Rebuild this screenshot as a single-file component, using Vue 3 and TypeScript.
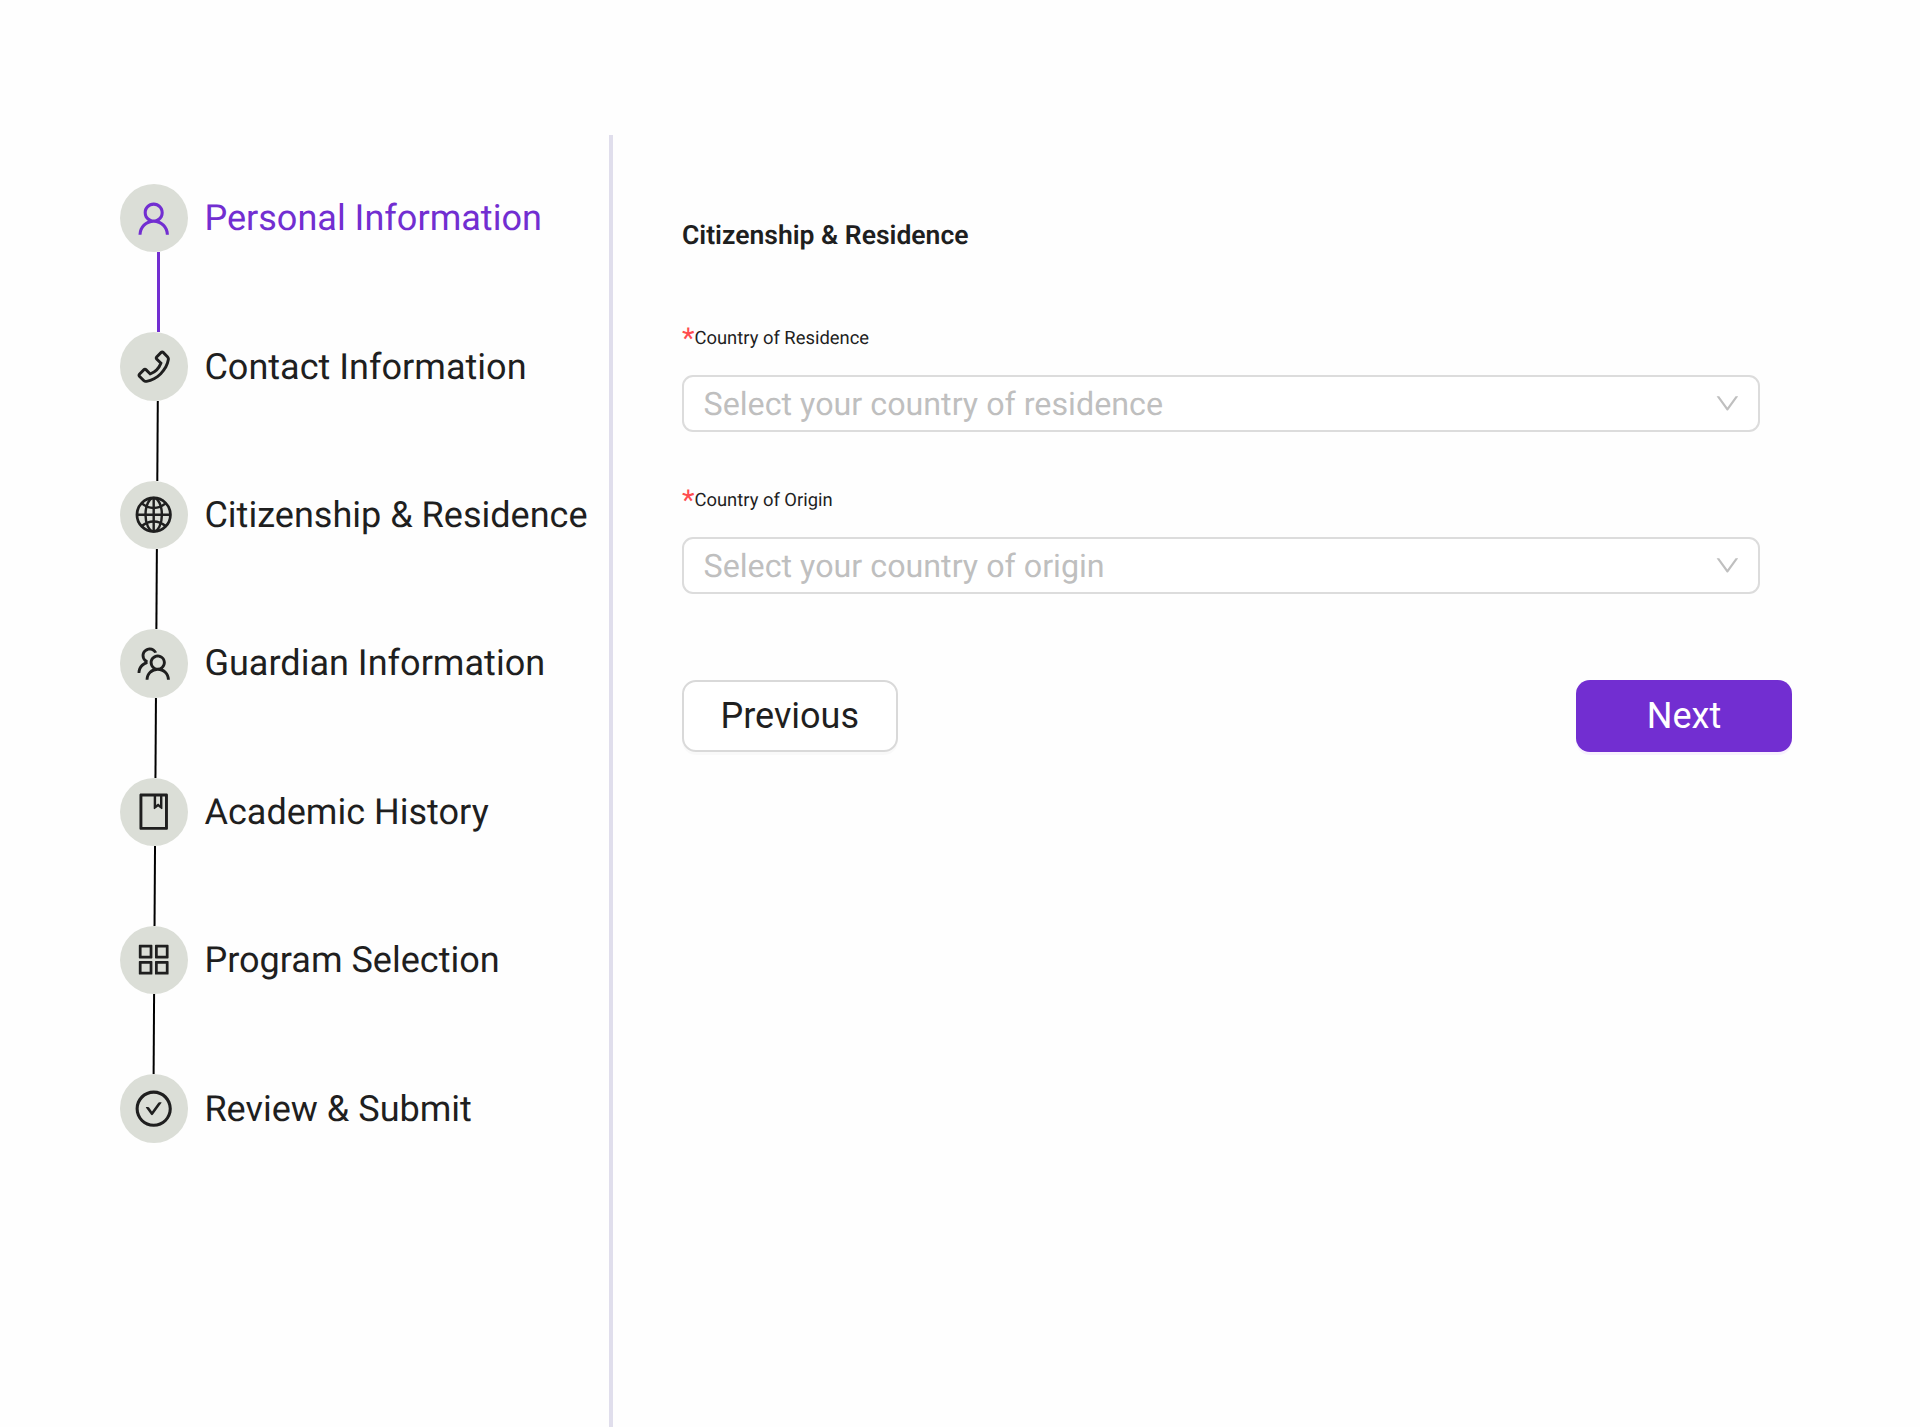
<script setup lang="ts">
interface Step {
  label: string
  icon: string[]
  globe?: boolean
  active?: boolean
}

interface Field {
  label: string
  placeholder: string
}

const steps: Step[] = [
  {
    label: 'Personal Information',
    active: true,
    icon: [
      'M858.5 763.6a374 374 0 00-80.6-119.5 375.63 375.63 0 00-119.5-80.6c-.4-.2-.8-.3-1.2-.5C719.5 518 760 444.7 760 362c0-137-111-248-248-248S264 225 264 362c0 82.7 40.5 156 102.8 201.1-.4.2-.8.3-1.2.5-44.8 18.9-85 46-119.5 80.6a375.63 375.63 0 00-80.6 119.5A371.7 371.7 0 00136 901.8a8 8 0 008 8.2h60c4.4 0 7.9-3.5 8-7.8 2-77.2 33-149.5 87.8-204.3 56.7-56.7 132-87.9 212.2-87.9s155.5 31.2 212.2 87.9C779 752.7 810 825 812 902.2c.1 4.4 3.6 7.8 8 7.8h60a8 8 0 008-8.2c-1-47.8-10.9-94.3-29.5-138.2zM512 534c-45.9 0-89.1-17.9-121.6-50.4S340 407.9 340 362c0-45.9 17.9-89.1 50.4-121.6S466.1 190 512 190s89.1 17.9 121.6 50.4S684 316.1 684 362c0 45.9-17.9 89.1-50.4 121.6S557.9 534 512 534z',
    ],
  },
  {
    label: 'Contact Information',
    icon: [
      'M877.1 238.7L770.6 132.3c-13-13-30.4-20.3-48.8-20.3s-35.8 7.2-48.8 20.3L558.3 246.8c-13 13-20.3 30.5-20.3 48.9 0 18.5 7.2 35.8 20.3 48.9l89.6 89.7a405.46 405.46 0 01-86.4 127.3c-36.7 36.9-79.6 66-127.2 86.6l-89.6-89.7c-13-13-30.4-20.3-48.8-20.3a68.2 68.2 0 00-48.8 20.3L132.3 673c-13 13-20.3 30.5-20.3 48.9 0 18.5 7.2 35.8 20.3 48.9l106.4 106.4c22.2 22.2 52.8 34.9 84.2 34.9 6.5 0 12.8-.5 19.2-1.6 132.4-21.8 263.8-92.3 369.9-198.3C818 606 888.4 474.6 910.4 342.1c6.3-37.6-6.3-76.3-33.3-103.4zm-37.6 91.5c-19.5 117.9-82.9 235.5-178.4 331s-213 158.9-330.9 178.4c-14.8 2.5-30-2.5-40.8-13.2L184.9 721.9 295.7 611l119.8 120 .9.9 21.6-8a481.29 481.29 0 00285.7-285.8l8-21.6-120.8-120.7 110.8-110.9 104.5 104.5c10.8 10.8 15.8 26 13.3 40.8z',
    ],
  },
  { label: 'Citizenship & Residence', icon: [], globe: true },
  {
    label: 'Guardian Information',
    icon: [
      'M824.2 699.9a301.55 301.55 0 00-86.4-60.4C783.1 602.8 812 546.8 812 484c0-110.8-92.4-201.7-203.2-200-109.1 1.7-197 90.6-197 200 0 62.8 29 118.8 74.2 155.5a300.95 300.95 0 00-86.4 60.4C345 754.6 314 826.8 312 903.8a8 8 0 008 8.2h56c4.3 0 7.9-3.4 8-7.7 1.9-58 25.4-112.3 66.7-153.5A226.62 226.62 0 01612 684c60.9 0 118.2 23.7 161.3 66.8C814.6 792 838 846.3 840 904.3c.1 4.3 3.7 7.7 8 7.7h56a8 8 0 008-8.2c-2-77-33-149.2-87.8-203.9zM612 612c-34.2 0-66.4-13.3-90.5-37.5a126.86 126.86 0 01-37.5-91.8c.3-32.8 13.4-64.5 36.3-88 24-24.6 56.1-38.3 90.4-38.7 33.9-.3 66.8 12.9 91 36.6 24.8 24.3 38.4 56.8 38.4 91.4 0 34.2-13.3 66.3-37.5 90.5A127.3 127.3 0 01612 612zM361.5 510.4c-.9-8.7-1.4-17.5-1.4-26.4 0-15.9 1.5-31.4 4.3-46.5.7-3.6-1.2-7.3-4.5-8.8-13.6-6.1-26.1-14.5-36.9-25.1a127.54 127.54 0 01-38.7-95.4c.9-32.1 13.8-62.6 36.3-85.6 24.7-25.3 57.9-39.1 93.2-38.7 31.9.3 62.7 12.6 86 34.4 7.9 7.4 14.7 15.6 20.4 24.4 2 3.1 5.9 4.4 9.3 3.2 17.6-6.1 36.2-10.4 55.3-12.4 5.6-.6 8.8-6.6 6.3-11.6-32.5-64.3-98.9-108.7-175.7-109.9-110.9-1.7-203.3 89.2-203.3 199.9 0 62.8 28.9 118.8 74.2 155.5-31.8 14.7-61.1 35-86.5 60.4-54.8 54.7-85.8 126.9-87.8 204a8 8 0 008 8.2h56.1c4.3 0 7.9-3.4 8-7.7 1.9-58 25.4-112.3 66.7-153.5 29.4-29.4 65.4-49.8 104.7-59.7 3.9-1 6.5-4.7 6-8.7z',
    ],
  },
  {
    label: 'Academic History',
    icon: [
      'M832 64H192c-17.7 0-32 14.3-32 32v832c0 17.7 14.3 32 32 32h640c17.7 0 32-14.3 32-32V96c0-17.7-14.3-32-32-32zm-260 72h96v209.9L621.5 312 572 347.4V136zm220 752H232V136h280v296.9c0 3.3 1 6.6 3 9.3a15.9 15.9 0 0022.3 3.7l83.8-59.9 81.4 59.4c2.7 2 6 3.1 9.4 3.1 8.8 0 16-7.2 16-16V136h64v752z',
    ],
  },
  {
    label: 'Program Selection',
    icon: [
      'M464 144H160c-8.8 0-16 7.2-16 16v304c0 8.8 7.2 16 16 16h304c8.8 0 16-7.2 16-16V160c0-8.8-7.2-16-16-16zm-52 268H212V212h200v200z',
      'M864 144H560c-8.8 0-16 7.2-16 16v304c0 8.8 7.2 16 16 16h304c8.8 0 16-7.2 16-16V160c0-8.8-7.2-16-16-16zm-52 268H612V212h200v200z',
      'M464 544H160c-8.8 0-16 7.2-16 16v304c0 8.8 7.2 16 16 16h304c8.8 0 16-7.2 16-16V560c0-8.8-7.2-16-16-16zm-52 268H212V612h200v200z',
      'M864 544H560c-8.8 0-16 7.2-16 16v304c0 8.8 7.2 16 16 16h304c8.8 0 16-7.2 16-16V560c0-8.8-7.2-16-16-16zm-52 268H612V612h200v200z',
    ],
  },
  {
    label: 'Review & Submit',
    icon: [
      'M699 353h-46.9c-10.2 0-19.9 4.9-25.9 13.3L469 584.3l-71.2-98.8c-6-8.3-15.6-13.3-25.9-13.3H325c-6.5 0-10.3 7.4-6.5 12.7l124.6 172.8a31.8 31.8 0 0051.7 0l210.6-292c3.9-5.3.1-12.7-6.4-12.7z',
      'M512 64C264.6 64 64 264.6 64 512s200.6 448 448 448 448-200.6 448-448S759.4 64 512 64zm0 820c-205.4 0-372-166.6-372-372s166.6-372 372-372 372 166.6 372 372-166.6 372-372 372z',
    ],
  },
]

const fields: Field[] = [
  { label: 'Country of Residence', placeholder: 'Select your country of residence' },
  { label: 'Country of Origin', placeholder: 'Select your country of origin' },
]

// The track leans slightly to the left from the second step to the last.
function trackX(index: number, end: boolean): number {
  if (index === 0) return 38.5
  const y = (index - 1) * 148.4 + (end ? 80 : 0)
  return 37.8 - (y / 674) * 4.2
}
</script>

<template>
  <div class="page">
    <aside class="sidebar">
      <template v-for="(step, i) in steps" :key="step.label">
        <div class="step" :class="{ active: step.active }">
          <span class="badge">
            <svg class="icon" viewBox="0 0 1024 1024" fill="currentColor">
              <g v-if="step.globe" fill="none" stroke="currentColor" stroke-width="60">
                <circle cx="512" cy="512" r="414" stroke-width="68" />
                <ellipse cx="512" cy="512" rx="203" ry="414" />
                <path d="M512 98V926M98 512H926" />
                <path d="M218 232Q350 345 512 345T806 232" />
                <path d="M218 792Q350 679 512 679T806 792" />
              </g>
              <path v-for="d in step.icon" :key="d" :d="d" />
            </svg>
          </span>
          <span class="step-label">{{ step.label }}</span>
        </div>
        <svg v-if="i < steps.length - 1" class="track" viewBox="0 0 68 80">
          <line
            :x1="trackX(i, false)"
            y1="-1"
            :x2="trackX(i, true)"
            y2="81"
            :stroke="step.active ? '#722ed1' : '#000'"
            :stroke-width="step.active ? 3 : 2"
          />
        </svg>
      </template>
    </aside>

    <main class="content">
      <h1 class="title">Citizenship &amp; Residence</h1>
      <div v-for="field in fields" :key="field.label" class="field">
        <label class="label"><span class="star">*</span><span>{{ field.label }}</span></label>
        <div class="select">
          <span>{{ field.placeholder }}</span>
          <svg class="arrow" viewBox="0 0 1024 1024" fill="currentColor">
            <path d="M884 256h-75c-5.1 0-9.9 2.5-12.9 6.6L512 654.2 227.9 262.6c-3-4.1-7.8-6.6-12.9-6.6h-75c-6.5 0-10.3 7.4-6.5 12.7l352.6 486.1c12.8 17.6 39 17.6 51.7 0l352.6-486.1c3.9-5.3.1-12.7-6.4-12.7z" />
          </svg>
        </div>
      </div>
      <div class="actions">
        <button class="btn" type="button">Previous</button>
        <button class="btn primary" type="button">Next</button>
      </div>
    </main>
  </div>
</template>

<style>
body {
  margin: 0;
  background: #fefefe;
}
</style>

<style scoped>
.page {
  display: flex;
  box-sizing: border-box;
  width: 1920px;
  height: 1427px;
  padding-top: 135px;
  overflow: hidden;
  font-family: Roboto, "Liberation Sans", sans-serif;
  color: #1f1f1f;
  text-rendering: geometricPrecision;
}
.sidebar {
  box-sizing: border-box;
  flex: none;
  width: 613px;
  padding: 49px 0 0 120px;
  border-right: 4px solid #e0deec;
}
.step {
  display: flex;
  align-items: center;
  gap: 16px;
  height: 68.4px;
}
.badge {
  display: flex;
  flex: none;
  align-items: center;
  justify-content: center;
  width: 68.4px;
  height: 68.4px;
  border-radius: 50%;
  background: #dbded7;
}
.icon {
  width: 41.4px;
  height: 41.4px;
  margin-right: 0.6px;
}
.step-label {
  font-size: 36.05px;
  line-height: 56px;
  white-space: nowrap;
}
.active {
  color: #722ed1;
}
.track {
  display: block;
  width: 68px;
  height: 80px;
}
.content {
  flex: none;
  width: 1110px;
  padding: 81px 0 0 69px;
}
.title {
  margin: 0 0 73px;
  font-size: 26.5px;
  font-weight: 600;
  line-height: 40px;
}
.field {
  width: 1078px;
  height: 162px;
}
.label {
  display: flex;
  align-items: center;
  height: 20px;
  margin-bottom: 26px;
  font-size: 18.4px;
  line-height: 18px;
}
.star {
  color: #ff4d4f;
  font-size: 29px;
  line-height: 18px;
}
.select {
  display: flex;
  box-sizing: border-box;
  align-items: center;
  justify-content: space-between;
  height: 57.4px;
  padding: 0 16px 0 19.5px;
  border: 2px solid #dcdcdc;
  border-radius: 11px;
  background: #fff;
  color: #bfbfbf;
  font-size: 32.25px;
}
.arrow {
  width: 28.8px;
  height: 28.8px;
}
.actions {
  display: flex;
  justify-content: space-between;
  margin-top: 27px;
}
.btn {
  box-sizing: border-box;
  width: 215.5px;
  height: 72px;
  padding: 0;
  border: 2px solid #d9d9d9;
  border-radius: 14px;
  background: #fff;
  box-shadow: 0 3px 0 rgba(0, 0, 0, 0.02);
  color: #1f1f1f;
  font: 36px Roboto, "Liberation Sans", sans-serif;
}
.primary {
  width: 216px;
  border: 0;
  background: #722ed1;
  box-shadow: 0 3px 0 #f8f0ff;
  color: #fff;
}
</style>
